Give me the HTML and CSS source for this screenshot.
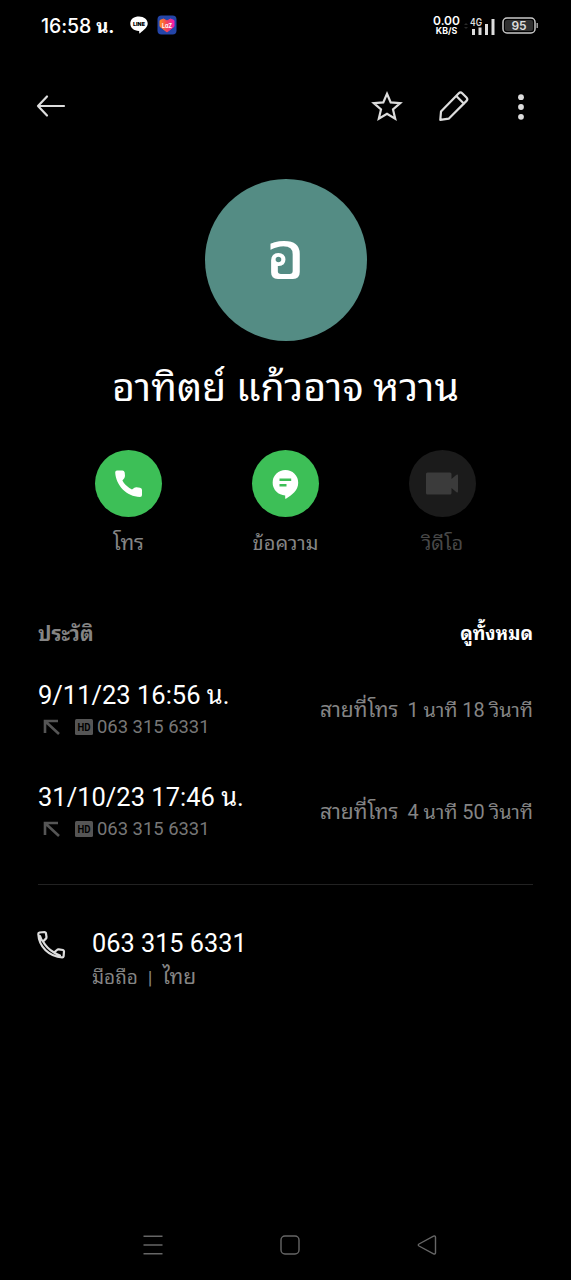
FILE: index.html
```html
<!DOCTYPE html>
<html lang="th">
<head>
<meta charset="utf-8">
<title>อาทิตย์ แก้วอาจ หวาน</title>
<link rel="stylesheet" href="styles.css">
</head>
<body>
<div class="phone">
  <header class="status">
    <span class="clock">16:58 <b>น.</b></span>
    <svg class="line-icon" width="18" height="18" viewBox="0 0 18 18"><path d="M9 .5c5 0 8.700 3 8.700 7 0 4-4.200 6.500-7.700 9.700-.7.600-.9-.2-.8-2.300C4 15 .3 12 .3 7.500S4 .5 9 .5z" fill="#fff"/><text x="9" y="10" text-anchor="middle" textLength="12" lengthAdjust="spacingAndGlyphs" class="line-word">LINE</text></svg>
    <svg class="shop-icon" width="20" height="20" viewBox="0 0 20 20"><defs><linearGradient id="heart"><stop offset="0" stop-color="#ff8a20"/><stop offset=".5" stop-color="#f5415b"/><stop offset="1" stop-color="#f21bb0"/></linearGradient></defs><rect x=".5" y=".5" width="19" height="19" rx="4" fill="#2445a8"/><path d="M3 5.500 6.500 4 10 6l3.500-2L17 5.500v6L10 17l-7-5.500z" fill="url(#heart)" stroke="url(#heart)" stroke-linejoin="round"/><text x="10" y="12.500" text-anchor="middle" textLength="10" lengthAdjust="spacingAndGlyphs" class="shop-word">LαZ</text></svg>
    <div class="speed"><span class="rate">0.00</span><span class="unit">KB/S</span></div>
    <svg class="signal" width="32" height="22" viewBox="0 0 32 22"><path d="m0 9 2-2 2 2zM0 11l2 2 2-2z" fill="#292929"/><text x="6" y="10" class="net" textLength="12" lengthAdjust="spacingAndGlyphs">4G</text><path d="M8 13h3v6H8zM14.500 11.500h3V19h-3zM21 8h3v11h-3zM27.500 3h3v16h-3z" fill="#ddd"/></svg>
    <svg class="battery" width="36" height="18" viewBox="0 0 36 18"><rect x="1" y="1" width="32" height="15" rx="4" fill="none" stroke="#c8c8c8" stroke-width="1.500"/><rect x="3" y="3" width="28" height="11" rx="2" fill="#303030"/><path d="M35.200 6v5" stroke="#aaa" stroke-width="1.400"/><text x="17" y="13" text-anchor="middle" class="charge">95</text></svg>
  </header>

  <nav class="toolbar">
    <svg class="back" width="30" height="24" viewBox="0 0 30 24"><path d="M28 12H2M11 2.500 2 12l9 9.500" class="stroke"/></svg>
    <svg class="star" width="32" height="32" viewBox="0 0 32 32"><path d="m16 3.700 3.700 8.700 9.500.8-7.200 6.200 2.200 9.300-8.200-4.900-8.200 4.900 2.200-9.300-7.200-6.200 9.500-.8z" class="stroke sharp"/></svg>
    <svg class="pencil" width="32" height="32" viewBox="0 0 32 32"><path d="M2.300 29.800 3 21.500 20.800 3.300q1.700-1.700 3.400 0l4.300 4.200q1.700 1.700 0 3.400L10.700 28.700zM18.300 6l7.700 7.700" class="stroke"/></svg>
    <svg class="more" width="8" height="28" viewBox="0 0 8 28"><circle cx="4" cy="4.200" r="2.900"/><circle cx="4" cy="14" r="2.900"/><circle cx="4" cy="23.800" r="2.900"/></svg>
  </nav>

  <main>
    <div class="avatar"><span>อ</span></div>
    <h1 class="name"><span>อาทิตย์ แก้วอาจ หวาน</span></h1>

    <div class="actions">
      <div class="action"><div class="disc"><svg width="67" height="67" viewBox="0 0 67 67"><path d="M22 20.500h5.500q1.700 0 2.200 2l.3 3.500q.2 1.700-2.600 4.600Q30 36 37 39.500q3-2.500 4.500-2.200l3.500.5q2 .4 2 2.200V45q0 2-2 2C31.500 46.500 21 35.500 20.200 22.500q0-2 1.800-2z" fill="#fff"/></svg></div><span class="call-word">โทร</span></div>
      <div class="action"><div class="disc"><svg width="67" height="67" viewBox="0 0 67 67"><path d="M33.500 20a12.700 12.700 0 0 1 12.700 12.700c0 7.500-6.200 12.300-12.300 16q-.7.300-.7-.5v-2.800A12.700 12.700 0 0 1 33.500 20z" fill="#fff"/><path d="M27.500 29.700h11.700M27.500 35.300h7" stroke="#3dbf57" stroke-width="2.600"/></svg></div><span class="msg-word">ข้อความ</span></div>
      <div class="action off"><div class="disc"><svg width="67" height="67" viewBox="0 0 67 67"><path d="M18.500 22.500H41q1.500 0 1.500 1.500v5l5-4.200q1.500-1 1.500.7v16q0 1.700-1.500.7l-5-4.200V43q0 1.500-1.500 1.500H18.500Q17 44.500 17 43V24q0-1.500 1.500-1.500z" fill="#3b3b3b"/></svg></div><span class="video-word">วิดีโอ</span></div>
    </div>

    <section class="history">
      <div class="head"><h2>ประวัติ</h2><a>ดูทั้งหมด</a></div>
      <div class="entry">
        <div><div class="when">9/11/23 16:56 น.</div>
          <div class="num"><svg class="arrow" width="18" height="16" viewBox="0 0 18 16"><path d="M2 14V2h13M3 3l13 12" class="dir"/></svg><svg class="hd" width="18" height="16" viewBox="0 0 18 16"><rect width="18" height="16" rx="1.500" fill="#555"/><text x="9" y="12.200" text-anchor="middle" textLength="13" lengthAdjust="spacingAndGlyphs" class="hd-word">HD</text></svg><span>063 315 6331</span></div></div>
        <div class="duration"><span class="call-type">สายที่โทร</span><span>1 นาที 18 วินาที</span></div>
      </div>
      <div class="entry">
        <div><div class="when">31/10/23 17:46 น.</div>
          <div class="num"><svg class="arrow" width="18" height="16" viewBox="0 0 18 16"><path d="M2 14V2h13M3 3l13 12" class="dir"/></svg><svg class="hd" width="18" height="16" viewBox="0 0 18 16"><rect width="18" height="16" rx="1.500" fill="#555"/><text x="9" y="12.200" text-anchor="middle" textLength="13" lengthAdjust="spacingAndGlyphs" class="hd-word">HD</text></svg><span>063 315 6331</span></div></div>
        <div class="duration"><span class="call-type">สายที่โทร</span><span>4 นาที 50 วินาที</span></div>
      </div>
    </section>

    <section class="contact">
      <svg class="handset" width="30" height="30" viewBox="0 0 30 30"><path d="M3.500 2.500 8.500 2q1 0 1.400 1l.6 4q.1 1-.8 1.900L7 11.500Q11 18.500 18 22.500l3-2.500q.7-.8 1.700-.7l4.300.7q1 .3 1 1.400l-.4 5q-.2 1-1.300 1C13 26.500 3 17 2.300 4q0-1.300 1.200-1.500zM4 6q1 3.500 3 5.500M18 22.500q3 2 6 3" class="stroke"/></svg>
      <div><div class="number">063 315 6331</div><div class="kind"><span>มือถือ</span><i>|</i><span class="country">ไทย</span></div></div>
    </section>
  </main>

  <footer class="sysnav">
    <svg width="20" height="20" viewBox="0 0 20 20"><path d="M.5 1.200h19M.5 10h19M.5 18.800h19"/></svg>
    <svg width="20" height="20" viewBox="0 0 20 20"><rect x="1" y="1" width="18" height="18" rx="4"/></svg>
    <svg width="20" height="20" viewBox="0 0 20 20"><path d="M2 9 16.500 1.200q2-.8 2 1v15.600q0 1.800-2 1L2 11q-1.500-1 0-2z"/></svg>
  </footer>
</div>
</body>
</html>
```
FILE: styles.css
```css
* { box-sizing: border-box; }
body { margin: 0; background: #000; color: #fff; font-family: Roboto, "Noto Sans Thai Looped", "Noto Looped Thai", "Droid Sans Thai", Loma, Waree, Garuda, Umpush, Sarabun, "Noto Serif Thai", "Noto Sans Thai", "Noto Sans", sans-serif; }
svg { display: block; flex: none; }
h1, h2 { margin: 0; font-weight: 400; }
.phone { width: 571px; height: 1280px; overflow: hidden; display: flex; flex-direction: column; background: #000; white-space: nowrap; }

.status { height: 50px; padding-left: 41px; display: flex; align-items: center; flex: none; }
.clock { width: 89px; font-weight: 500; font-size: 19.500px; line-height: 24px; font-family: Inter, "Noto Sans Thai Looped", Loma, Waree, Garuda, "Noto Serif Thai", sans-serif; letter-spacing: -.1px; padding-top: 2px; }
.clock b { font-size: 18.500px; }
.line-icon { margin-right: 9px; }
.line-word { font: 900 5px Inter, sans-serif; fill: #000; }
.shop-word { font: 700 6px Inter, sans-serif; fill: #fff; }
.speed { margin-left: 255px; width: 29px; display: flex; flex-direction: column; align-items: center; }
.rate { font: 600 12px/11px Inter, sans-serif; }
.unit { font: 700 8.800px/9px Inter, sans-serif; }
.signal { margin-left: 3px; margin-top: 3px; }
.net { font: 600 10px Inter, sans-serif; fill: #ddd; }
.battery { margin-left: 6px; margin-top: 2px; }
.charge { font: 600 12px Inter, sans-serif; fill: #ddd; }

.toolbar { height: 112px; padding-left: 36px; display: flex; align-items: center; flex: none; }
.stroke { fill: none; stroke: #ddd; stroke-width: 2.200; stroke-linecap: round; stroke-linejoin: round; }
.sharp { stroke-linejoin: miter; }
.star { margin-left: 305px; }
.pencil { margin-left: 35px; }
.more { margin-left: 47px; margin-top: 1px; fill: #ddd; }

main { flex: 1; padding: 17px 38px 0; }
.avatar { width: 162px; height: 162px; margin: 0 auto; padding-bottom: 6px; border-radius: 50%; background: #548c84; display: flex; align-items: center; justify-content: center; font-size: 66px; line-height: 80px; font-weight: 500; }
.name { height: 60px; margin-top: 17px; display: flex; justify-content: center; font-size: 39.400px; line-height: 60px; }

.actions { display: flex; justify-content: space-between; margin: 32px 57px 0; }
.action { width: 67px; display: flex; flex-direction: column; align-items: center; color: #858585; font-size: 20px; line-height: 30px; }
.disc { width: 67px; height: 67px; border-radius: 50%; background: #3dbf57; margin-bottom: 11px; }
.call-word { font-size: 21px; }
.off { color: #484848; }
.off .disc { background: #1b1b1b; }

.head { display: flex; justify-content: space-between; align-items: center; height: 30px; margin-top: 61px; font-size: 18.500px; line-height: 30px; font-weight: 700; }
.head h2 { font-size: 20px; font-weight: 700; color: #858585; }
.entry { height: 70px; margin-top: 26px; display: flex; justify-content: space-between; }
.entry + .entry { margin-top: 32px; }
.when { height: 39px; padding-top: 4px; font-size: 25.500px; line-height: 32px; }
.num { height: 26px; padding-left: 5px; display: flex; align-items: center; color: #777; font-size: 18.400px; line-height: 26px; }
.arrow { margin-right: 14px; }
.dir { fill: none; stroke: #555; stroke-width: 2.600; }
.hd { margin-right: 4px; }
.hd-word { font: 700 11px Roboto, sans-serif; fill: #000; }
.duration { display: flex; align-items: baseline; gap: 9px; padding-top: 20px; color: #858585; font-size: 19.900px; line-height: 30px; }
.call-type { font-size: 21px; }

.contact { border-top: 1px solid #222; margin-top: 37px; padding-top: 43px; display: flex; }
.handset { margin: 2px 26px 0 -2px; }
.number { font-size: 25.300px; line-height: 32px; }
.kind { display: flex; align-items: baseline; gap: 10px; color: #858585; font-size: 19px; line-height: 34px; }
.kind i { font-style: normal; }
.country { font-size: 21px; }

.sysnav { height: 70px; padding: 0 134px 0 143px; display: flex; justify-content: space-between; align-items: center; flex: none; }
.sysnav svg { fill: none; stroke: #666; stroke-width: 1.400; }
```
